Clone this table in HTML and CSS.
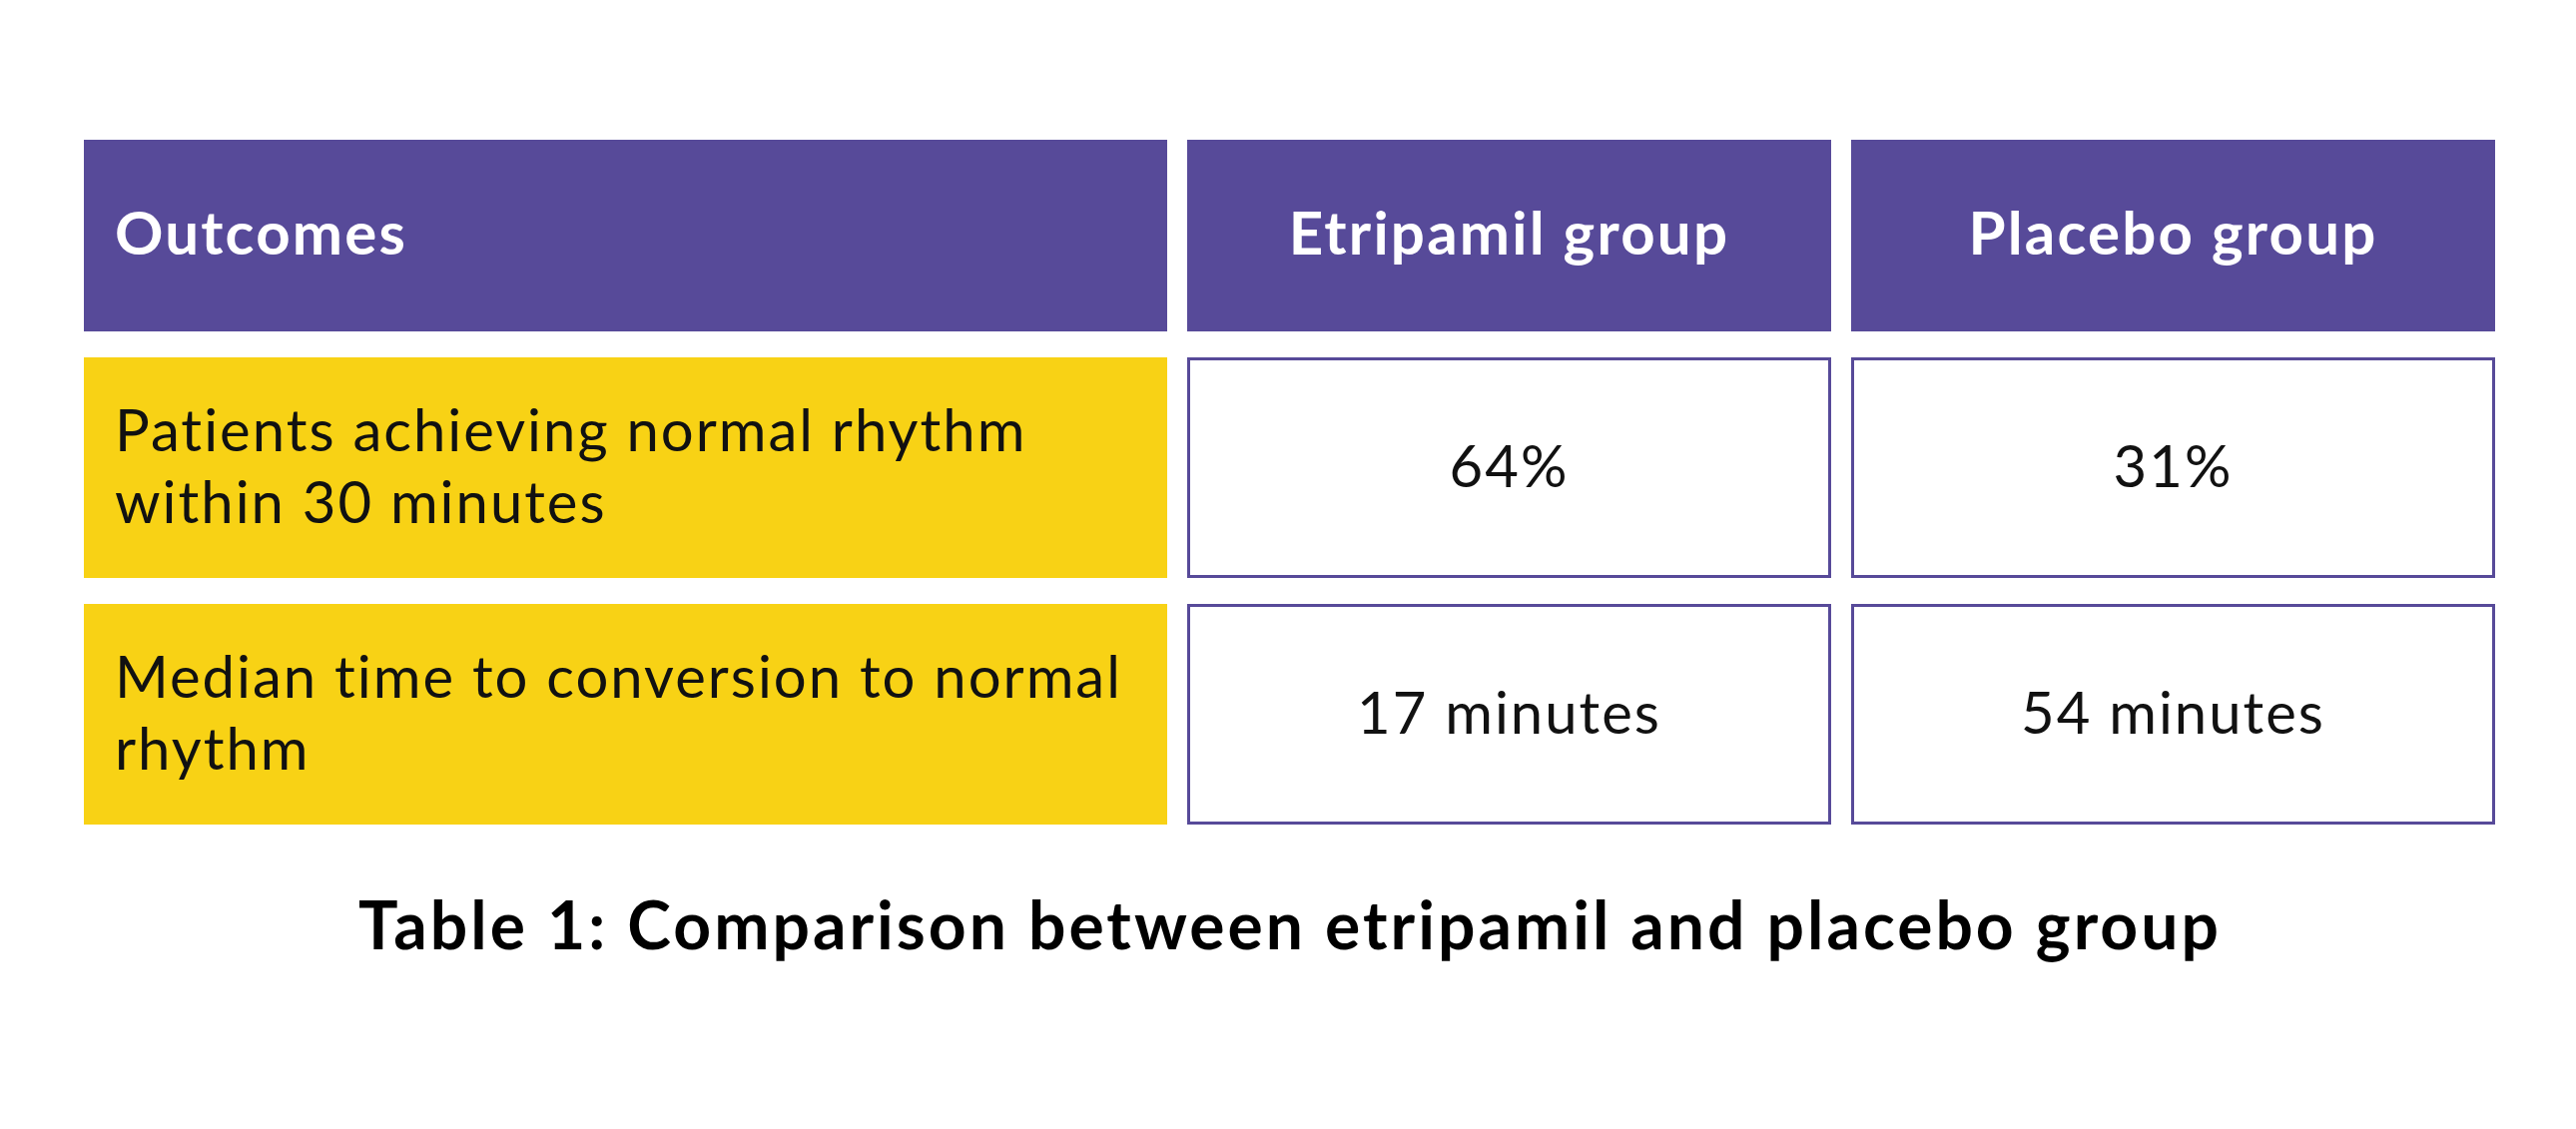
FILE: index.html
```html
<!DOCTYPE html>
<html lang="en">
<head>
<meta charset="utf-8">
<title>Comparison between etripamil and placebo group</title>
<link rel="stylesheet" href="styles.css">
</head>
<body>
<main class="page">
  <div class="table">
    <div class="cell head head-first">Outcomes</div>
    <div class="cell head">Etripamil group</div>
    <div class="cell head">Placebo group</div>

    <div class="cell label">Patients achieving normal rhythm within 30 minutes</div>
    <div class="cell value">64%</div>
    <div class="cell value">31%</div>

    <div class="cell label">Median time to conversion to normal rhythm</div>
    <div class="cell value">17 minutes</div>
    <div class="cell value">54 minutes</div>
  </div>
  <p class="caption">Table 1: Comparison between etripamil and placebo group</p>
</main>
</body>
</html>
```

FILE: styles.css
```css
html, body {
  margin: 0;
  padding: 0;
  background: #ffffff;
}

body {
  font-family: "Lato", "Open Sans", sans-serif;
  color: #111111;
}

.page {
  width: 2580px;
  height: 1131px;
  padding: 140px 0 0 84px;
  box-sizing: border-box;
}

.table {
  display: grid;
  grid-template-columns: 1085px 645px 645px;
  grid-template-rows: 192px 221px 221px;
  column-gap: 20px;
  row-gap: 26px;
}

.cell {
  display: flex;
  align-items: center;
  box-sizing: border-box;
  padding-bottom: 6px;
}

.head {
  background: #574a99;
  color: #ffffff;
  font-weight: 700;
  font-size: 60px;
  letter-spacing: 2.2px;
  justify-content: center;
  padding-bottom: 8px;
}

.head-first {
  justify-content: flex-start;
  padding-left: 31px;
}

.label {
  background: #f8d215;
  font-size: 58px;
  line-height: 72px;
  letter-spacing: 2px;
  padding-left: 31px;
  padding-right: 20px;
  font-weight: 400;
}

.value {
  background: #ffffff;
  border: 3px solid #574a99;
  justify-content: center;
  font-size: 58px;
  letter-spacing: 2px;
  font-weight: 400;
}

.caption {
  margin: 60px 0 0 0;
  width: 2416px;
  text-align: center;
  font-weight: 700;
  font-size: 66px;
  letter-spacing: 3px;
  color: #000000;
}
```
